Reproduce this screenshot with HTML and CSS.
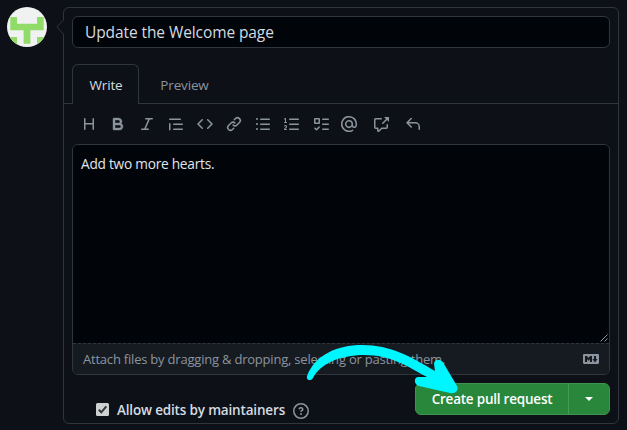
FILE: index.html
```html
<!DOCTYPE html>
<html lang="en">
<head>
<meta charset="utf-8">
<title>Open a pull request</title>
<link rel="stylesheet" href="styles.css">
</head>
<body>
<main class="page">
  <svg class="avatar" viewBox="0 0 40 40">
    <defs>
      <clipPath id="round"><circle cx="20" cy="20" r="20"/></clipPath>
    </defs>
    <g clip-path="url(#round)">
      <path fill="#f0f2f1" d="M0 0h40v40H0z"/>
      <path fill="#91db69" d="M3.3 10H10v6.7h20V10h6.7v13.3H23.4v13.4h-6.8V23.3H3.3zM3.3 30H10v6.7H3.3zM30 30h6.7v6.7H30z"/>
    </g>
  </svg>
  <form class="card">
    <svg class="caret" viewBox="0 0 8 16"><path d="M8 .5.8 8 8 15.5" fill="#0d1117" stroke="#30363d"/></svg>
    <div class="title-input"><span class="title-text">Update the Welcome page</span></div>
    <nav class="tabs">
      <div class="tab active"><span>Write</span></div>
      <div class="tab preview"><span>Preview</span></div>
    </nav>
    <div class="toolbar">
      <svg viewBox="0 0 16 16"><path d="M3.75 2a.75.75 0 0 1 .75.75V7h7V2.75a.75.75 0 0 1 1.5 0v10.5a.75.75 0 0 1-1.5 0V8.5h-7v4.75a.75.75 0 0 1-1.5 0V2.75A.75.75 0 0 1 3.75 2Z"/></svg>
      <svg class="bold" viewBox="0 0 16 16"><path d="M4 2h4.5a3.501 3.501 0 0 1 2.852 5.53A3.499 3.499 0 0 1 9.5 14H4a1 1 0 0 1-1-1V3a1 1 0 0 1 1-1Zm1 7v3h4.5a1.5 1.5 0 0 0 0-3Zm3.5-2a1.5 1.5 0 0 0 0-3H5v3Z"/></svg>
      <svg viewBox="0 0 16 16"><path d="M6 2.75A.75.75 0 0 1 6.75 2h6.5a.75.75 0 0 1 0 1.5h-2.505l-3.858 9H9.25a.75.75 0 0 1 0 1.5h-6.5a.75.75 0 0 1 0-1.5h2.505l3.858-9H6.75A.75.75 0 0 1 6 2.75Z"/></svg>
      <svg viewBox="0 0 16 16"><path d="M1.75 2.5h10.5a.75.75 0 0 1 0 1.5H1.75a.75.75 0 0 1 0-1.5Zm4 5h8.5a.75.75 0 0 1 0 1.5h-8.5a.75.75 0 0 1 0-1.5Zm0 5h8.5a.75.75 0 0 1 0 1.5h-8.5a.75.75 0 0 1 0-1.5ZM2.5 7.75v6a.75.75 0 0 1-1.5 0v-6a.75.75 0 0 1 1.5 0Z"/></svg>
      <svg viewBox="0 0 16 16"><path d="m11.28 3.22 4.25 4.25a.75.75 0 0 1 0 1.06l-4.25 4.25a.749.749 0 0 1-1.275-.326.749.749 0 0 1 .215-.734L13.94 8l-3.72-3.72a.749.749 0 0 1 .326-1.275.749.749 0 0 1 .734.215Zm-6.56 0a.751.751 0 0 1 1.042.018.751.751 0 0 1 .018 1.042L2.06 8l3.72 3.72a.749.749 0 0 1-.326 1.275.749.749 0 0 1-.734-.215L.47 8.53a.75.75 0 0 1 0-1.06Z"/></svg>
      <svg viewBox="0 0 16 16"><path d="m7.775 3.275 1.25-1.25a3.5 3.5 0 1 1 4.95 4.95l-2.5 2.5a3.5 3.5 0 0 1-4.95 0 .751.751 0 0 1 .018-1.042.751.751 0 0 1 1.042-.018 1.998 1.998 0 0 0 2.83 0l2.5-2.5a2.002 2.002 0 0 0-2.83-2.83l-1.25 1.25a.751.751 0 0 1-1.042-.018.751.751 0 0 1-.018-1.042Zm-4.69 9.64a1.998 1.998 0 0 0 2.83 0l1.25-1.25a.751.751 0 0 1 1.042.018.751.751 0 0 1 .018 1.042l-1.25 1.25a3.5 3.5 0 1 1-4.95-4.95l2.5-2.5a3.5 3.5 0 0 1 4.95 0 .751.751 0 0 1-.018 1.042.751.751 0 0 1-1.042.018 1.998 1.998 0 0 0-2.83 0l-2.5 2.5a1.998 1.998 0 0 0 0 2.83Z"/></svg>
      <svg viewBox="0 0 16 16"><path d="M5.75 2.5h8.5a.75.75 0 0 1 0 1.5h-8.5a.75.75 0 0 1 0-1.5Zm0 5h8.5a.75.75 0 0 1 0 1.5h-8.5a.75.75 0 0 1 0-1.5Zm0 5h8.5a.75.75 0 0 1 0 1.5h-8.5a.75.75 0 0 1 0-1.5ZM2 14a1 1 0 1 1 0-2 1 1 0 0 1 0 2Zm1-6a1 1 0 1 1-2 0 1 1 0 0 1 2 0ZM2 4a1 1 0 1 1 0-2 1 1 0 0 1 0 2Z"/></svg>
      <svg viewBox="0 0 16 16"><path d="M5 3.25a.75.75 0 0 1 .75-.75h8.5a.75.75 0 0 1 0 1.5h-8.5A.75.75 0 0 1 5 3.25Zm0 5a.75.75 0 0 1 .75-.75h8.5a.75.75 0 0 1 0 1.5h-8.5A.75.75 0 0 1 5 8.25Zm0 5a.75.75 0 0 1 .75-.75h8.5a.75.75 0 0 1 0 1.5h-8.5a.75.75 0 0 1-.75-.75ZM.924 10.32a.5.5 0 0 1-.851-.525l.01-.018c.097-.144.215-.273.348-.384.228-.19.588-.392 1.068-.392.468 0 .858.181 1.126.484.259.294.377.673.377 1.038 0 .987-.686 1.495-1.156 1.845l-.047.035c-.303.225-.522.4-.654.597h1.357a.5.5 0 0 1 0 1H.5a.5.5 0 0 1-.5-.5c0-1.005.692-1.52 1.167-1.875l.035-.025c.531-.396.8-.625.8-1.078a.57.57 0 0 0-.128-.376C1.806 10.068 1.695 10 1.5 10a.658.658 0 0 0-.429.163.835.835 0 0 0-.144.153ZM2.003 2.5V6h.503a.5.5 0 0 1 0 1H.5a.5.5 0 0 1 0-1h.503V3.308l-.28.14a.5.5 0 0 1-.446-.895l1.003-.5a.5.5 0 0 1 .723.447Z"/></svg>
      <svg viewBox="0 0 16 16"><path fill-rule="evenodd" d="M2 2h4a1 1 0 0 1 1 1v4a1 1 0 0 1-1 1H2a1 1 0 0 1-1-1V3a1 1 0 0 1 1-1Zm4.655 8.595a.75.75 0 0 1 0 1.06L4.03 14.28a.75.75 0 0 1-1.06 0l-1.5-1.5a.749.749 0 0 1 .326-1.275.749.749 0 0 1 .734.215l.97.97 2.095-2.095a.75.75 0 0 1 1.06 0ZM9.75 2.5h5.5a.75.75 0 0 1 0 1.5h-5.5a.75.75 0 0 1 0-1.5Zm0 5h5.5a.75.75 0 0 1 0 1.5h-5.5a.75.75 0 0 1 0-1.5Zm0 5h5.5a.75.75 0 0 1 0 1.5h-5.5a.75.75 0 0 1 0-1.5Zm-7.25-9v3h3v-3Z"/></svg>
      <svg class="mention" viewBox="0 0 16 16"><path d="M4.75 2.37a6.501 6.501 0 0 0 6.5 11.26.75.75 0 0 1 .75 1.298A7.999 7.999 0 0 1 .989 4.148 8 8 0 0 1 16 7.75v1.5a2.75 2.75 0 0 1-5.072 1.475 3.999 3.999 0 0 1-6.65-4.19A4 4 0 0 1 12 8v1.25a1.25 1.25 0 0 0 2.5 0V7.867a6.5 6.5 0 0 0-9.75-5.496ZM10.5 8a2.5 2.5 0 1 0-5 0 2.5 2.5 0 0 0 5 0Z"/></svg>
      <svg class="crossref" viewBox="0 0 16 16"><path d="M2.75 3.5a.25.25 0 0 0-.25.25v7.5c0 .138.112.25.25.25h2a.75.75 0 0 1 .75.75v2.19l2.72-2.72a.749.749 0 0 1 .53-.22h4.5a.25.25 0 0 0 .25-.25v-2.5a.75.75 0 0 1 1.5 0v2.5A1.75 1.75 0 0 1 13.25 13H9.06l-2.573 2.573A1.458 1.458 0 0 1 4 14.543V13H2.75A1.75 1.75 0 0 1 1 11.25v-7.5C1 2.784 1.784 2 2.75 2h5.5a.75.75 0 0 1 0 1.5ZM16 1.25v4.146a.25.25 0 0 1-.427.177L14.03 4.03l-3.75 3.75a.749.749 0 0 1-1.275-.326.749.749 0 0 1 .215-.734l3.75-3.75-1.543-1.543A.25.25 0 0 1 11.604 1h4.146a.25.25 0 0 1 .25.25Z"/></svg>
      <svg class="reply" viewBox="0 0 16 16"><path d="M6.78 1.97a.75.75 0 0 1 0 1.06L3.81 6h6.44A4.75 4.75 0 0 1 15 10.75v2.5a.75.75 0 0 1-1.5 0v-2.5a3.25 3.25 0 0 0-3.25-3.25H3.81l2.97 2.97a.749.749 0 0 1-.326 1.275.749.749 0 0 1-.734-.215L1.47 7.28a.75.75 0 0 1 0-1.06l4.25-4.25a.75.75 0 0 1 1.06 0Z"/></svg>
    </div>
    <div class="editor">
      <div class="body-text"><span class="message">Add two more hearts.</span>
        <svg class="grip" viewBox="0 0 8 8"><path d="M.5 7.5l7-7M4.5 7.5l3-3" stroke="#a5a8ab" fill="none" stroke-width=".9"/></svg>
      </div>
      <div class="attach"><span class="hint">Attach files by dragging &amp; dropping, selecting or pasting them.</span>
        <svg class="md" viewBox="0 0 16 16"><path d="M14.85 3c.63 0 1.15.52 1.14 1.15v7.7c0 .63-.51 1.15-1.15 1.15H1.15C.52 13 0 12.48 0 11.84V4.15C0 3.52.52 3 1.15 3ZM9 11V5H7L5.5 7 4 5H2v6h2V8l1.5 1.92L7 8v3Zm2.99.5L14.5 8H13V5h-2v3H9.5Z"/></svg>
      </div>
    </div>
    <footer class="actions">
      <div class="allow">
        <svg class="check" viewBox="0 0 13 13"><rect width="13" height="13" rx="1.5" fill="#cfd1d1"/><path d="M2.8 6.7l2.5 2.6 5-6" fill="none" stroke="#32373c" stroke-width="2"/></svg>
        <span class="allow-text">Allow edits by maintainers</span>
        <svg class="help" viewBox="0 0 16 16"><path d="M0 8a8 8 0 1 1 16 0A8 8 0 0 1 0 8Zm8-6.5a6.5 6.5 0 1 0 0 13 6.5 6.5 0 0 0 0-13ZM6.92 6.085h.001a.749.749 0 1 1-1.342-.67c.169-.339.436-.701.849-.977C6.845 4.16 7.369 4 8 4a2.756 2.756 0 0 1 1.637.525c.503.377.863.965.863 1.725 0 .448-.115.83-.329 1.15-.205.307-.47.513-.692.662-.109.072-.22.138-.313.195l-.006.004a6.24 6.24 0 0 0-.26.16.952.952 0 0 0-.276.245.75.75 0 0 1-1.248-.832c.184-.264.42-.489.692-.661.103-.067.207-.132.313-.195l.007-.004c.1-.061.182-.11.258-.161a.969.969 0 0 0 .277-.245C8.96 6.514 9 6.427 9 6.25a.612.612 0 0 0-.262-.525A1.27 1.27 0 0 0 8 5.5c-.369 0-.595.09-.74.187a1.01 1.01 0 0 0-.34.398ZM9 11a1 1 0 1 1-2 0 1 1 0 0 1 2 0Z"/></svg>
      </div>
      <div class="buttons">
        <div class="create"><span>Create pull request</span></div>
        <div class="more"><svg viewBox="0 0 8 4"><path d="M0 0h8L4 4z"/></svg></div>
      </div>
    </footer>
  </form>
  <svg class="pointer" viewBox="0 0 160 60">
    <path fill="#00f6ff" d="M7 36C15 15 37 5 62 5C91 5 111 17 135 31L134 24C134 19 141 18 144 24L157 46C159 51 155 54 150 53L119 46C113 44 114 36 119 37L127 37C107 26 91 15 64 15C40 15 20 24 13 38C10 42 6 40 7 36Z"/>
  </svg>
</main>
</body>
</html>
```

FILE: styles.css
```css
* { box-sizing: border-box; }
body {
  margin: 0;
  background: #0d1117;
  color: #d5dbe1;
  font: 14px/20px "Open Sans", "Noto Sans", sans-serif;
  overflow: hidden;
}
svg { display: block; flex: none; }
span { white-space: nowrap; }
.page {
  position: relative;
  display: flex;
  align-items: flex-start;
  gap: 16px;
  width: 627px;
  height: 430px;
  padding: 7px;
}
.avatar { width: 40px; height: 40px; }
.card {
  position: relative;
  width: 556px;
  height: 417px;
  border: 1px solid #30363d;
  border-radius: 6px;
}
.caret { position: absolute; left: -8px; top: 11px; width: 8px; height: 16px; }
.title-input {
  display: flex;
  align-items: center;
  height: 32px;
  margin: 8px 8px 0;
  padding-left: 12px;
  background: #010409;
  border: 1px solid #30363d;
  border-radius: 6px;
  font-size: 15.5px;
}
.title-text { letter-spacing: -.09px; }
.tabs {
  display: flex;
  height: 40px;
  margin-top: 16px;
  padding-left: 8px;
  border-bottom: 1px solid #30363d;
}
.tab { display: flex; align-items: center; justify-content: center; width: 67px; height: 40px; padding-top: 1px; font-size: 13.5px; letter-spacing: -.15px; }
.active { background: #0d1117; border: 1px solid #30363d; border-bottom: 0; border-radius: 6px 6px 0 0; padding-top: 0; padding-left: 1px; }
.preview { margin-left: 12px; color: #8b949e; }
.toolbar { display: flex; align-items: center; gap: 13px; height: 40px; padding-left: 17px; fill: #8b949e; }
.toolbar svg { width: 16px; height: 16px; }
.toolbar .bold { stroke: #8b949e; stroke-width: .4; }
.toolbar .mention { margin-left: -1px; }
.toolbar .crossref { margin-left: 3px; }
.toolbar .reply { margin-left: 3px; }
.editor {
  display: flex;
  flex-direction: column;
  height: 231px;
  margin: 0 8px;
  border: 1px solid #30363d;
  border-radius: 6px;
  overflow: hidden;
}
.body-text { position: relative; flex: 1; padding: 9px 8px; background: #010409; color: #e1e6eb; }
.message { font-size: 13.7px; letter-spacing: -.25px; }
.grip { position: absolute; right: 1px; bottom: 1px; width: 8px; height: 8px; }
.attach {
  display: flex;
  align-items: center;
  justify-content: space-between;
  height: 31px;
  padding: 0 10px;
  background: #161b22;
  border-top: 1px dashed #30363d;
  color: #8b949e;
  font-size: 13px;
}
.hint { letter-spacing: -.21px; }
.md { width: 16px; height: 16px; fill: #8b949e; }
.actions { display: flex; justify-content: space-between; margin: 8px 8px 0; }
.allow { display: flex; align-items: center; padding: 22px 0 0 24px; height: 32px; font-weight: 600; font-size: 13.5px; }
.check { width: 13px; height: 13px; margin-top: -1px; }
.allow-text { margin-left: 8px; letter-spacing: -.17px; }
.help { width: 16px; height: 16px; margin: 2px 0 0 8px; fill: #8b949e; }
.buttons {
  display: flex;
  width: 195px;
  height: 32px;
  background: #29873b;
  border: 1px solid #3e9550;
  border-radius: 6px;
  color: #fff;
  font-weight: 600;
}
.create { display: flex; align-items: center; justify-content: center; width: 153px; border-right: 1px solid #459b55; font-size: 13.5px; letter-spacing: -.22px; }
.more { display: flex; flex: 1; align-items: center; justify-content: center; }
.more svg { width: 8px; height: 4px; fill: #fff; }
.pointer { position: absolute; left: 300px; top: 340px; width: 160px; height: 60px; }
```
